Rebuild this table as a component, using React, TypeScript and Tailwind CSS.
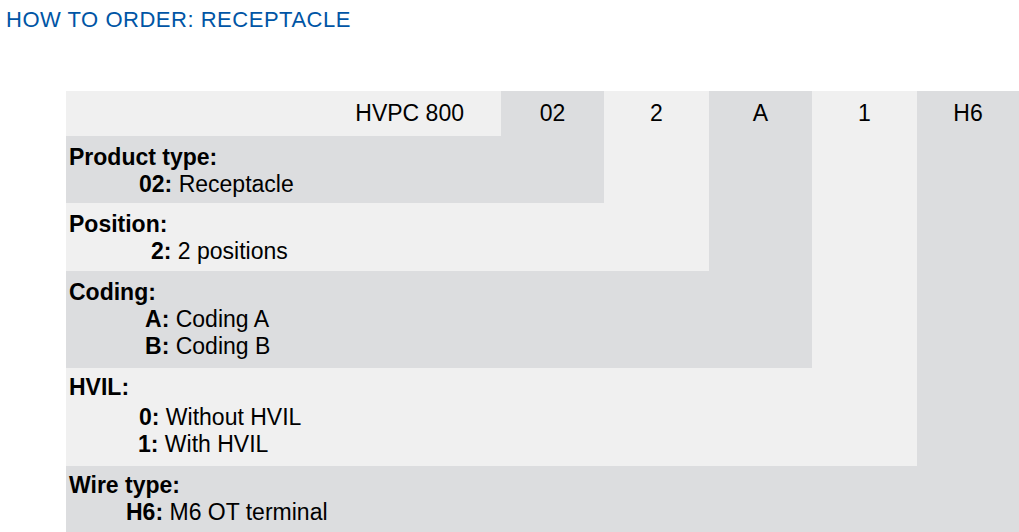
import React from "react";

function Item({ k, v, indent }: { k: string; v: string; indent: string }) {
  return (
    <div className={indent}>
      <span className="font-bold">{k}:</span> {v}
    </div>
  );
}

export default function App() {
  return (
    <div className="w-[1019px] h-[532px] overflow-hidden bg-white text-black font-['Liberation_Sans',Arial,sans-serif]">
      <div className="pl-[6px] pt-[7px] text-[22px] leading-[26px] tracking-[0.52px] text-[#0055a5]">
        HOW TO ORDER: RECEPTACLE
      </div>
      <div className="mt-[58px] ml-[66px] grid grid-cols-[435px_103px_105px_103px_105px_102px] grid-rows-[45px_67px_68px_97px_98px_67px] text-[23px]">
        {/* header row */}
        <div className="col-start-1 row-start-1 bg-[#f0f0f0] flex items-center justify-end pr-[37px]">HVPC 800</div>
        <div className="col-start-2 row-start-1 bg-[#dcdddf] flex items-center justify-center">02</div>
        <div className="col-start-3 row-start-1 bg-[#f0f0f0] flex items-center justify-center">2</div>
        <div className="col-start-4 row-start-1 bg-[#dcdddf] flex items-center justify-center">A</div>
        <div className="col-start-5 row-start-1 bg-[#f0f0f0] flex items-center justify-center">1</div>
        <div className="col-start-6 row-start-1 bg-[#dcdddf] flex items-center justify-center">H6</div>

        {/* column fillers */}
        <div className="col-start-3 row-start-2 bg-[#f0f0f0]" />
        <div className="col-start-4 row-start-2 row-span-2 bg-[#dcdddf]" />
        <div className="col-start-5 row-start-2 row-span-3 bg-[#f0f0f0]" />
        <div className="col-start-6 row-start-2 row-span-4 bg-[#dcdddf]" />

        {/* description blocks */}
        <div className="col-start-1 col-span-2 row-start-2 bg-[#dcdddf] pt-[8px] pl-[3px] leading-[27px]">
          <div className="font-bold">Product type:</div>
          <Item k="02" v="Receptacle" indent="pl-[70px]" />
        </div>
        <div className="col-start-1 col-span-3 row-start-3 bg-[#f0f0f0] pt-[8px] pl-[3px] leading-[27px]">
          <div className="font-bold">Position:</div>
          <Item k="2" v="2 positions" indent="pl-[82px]" />
        </div>
        <div className="col-start-1 col-span-4 row-start-4 bg-[#dcdddf] pt-[8px] pl-[3px] leading-[27px]">
          <div className="font-bold">Coding:</div>
          <Item k="A" v="Coding A" indent="pl-[76px]" />
          <Item k="B" v="Coding B" indent="pl-[76px]" />
        </div>
        <div className="col-start-1 col-span-5 row-start-5 bg-[#f0f0f0] pt-[6px] pl-[3px] leading-[27px]">
          <div className="font-bold">HVIL:</div>
          <div className="mt-[3px]">
            <Item k="0" v="Without HVIL" indent="pl-[70px]" />
            <Item k="1" v="With HVIL" indent="pl-[69px]" />
          </div>
        </div>
        <div className="col-start-1 col-span-6 row-start-6 bg-[#dcdddf] pt-[6px] pl-[3px] leading-[27px]">
          <div className="font-bold">Wire type:</div>
          <Item k="H6" v="M6 OT terminal" indent="pl-[57px]" />
        </div>
      </div>
    </div>
  );
}
